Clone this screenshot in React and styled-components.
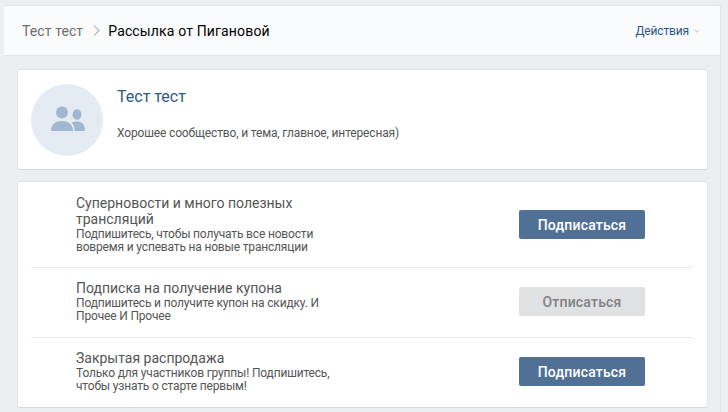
import React from 'react';
import styled, { createGlobalStyle } from 'styled-components';

const GlobalStyle = createGlobalStyle`
  html, body {
    margin: 0;
    height: 412px;
    overflow: hidden;
    background: #edeef0;
    font-family: Roboto, "Liberation Sans", sans-serif;
    color: #4d4d4d;
  }
`;

const Panel = styled.div`
  box-sizing: border-box;
  width: 717px;
  height: 412px;
  margin: 5px 0 0 4px;
  border-right: 1px solid #e3e4e8;
`;

const Header = styled.header`
  display: flex;
  align-items: center;
  justify-content: space-between;
  box-sizing: border-box;
  height: 51px;
  padding: 0 20px 0 18px;
  background: #fafbfc;
  border-top: 1px solid #e3e4e8;
  border-bottom: 1px solid #e3e4e8;
  border-radius: 2px 2px 0 0;
`;

const Crumbs = styled.div`
  display: flex;
  align-items: center;
  font-size: 14px;
`;

const CrumbLink = styled.span`
  color: #6d6d6d;
  letter-spacing: 0.1px;
`;

const CrumbSep = styled.svg`
  width: 7px;
  height: 11px;
  margin: 0 8px 0 10px;
  fill: none;
  stroke: #b8bcc2;
  stroke-width: 1.3;
`;

const CrumbCurrent = styled.span`
  color: #000;
  letter-spacing: 0.15px;
`;

const Actions = styled.div`
  display: flex;
  align-items: center;
  gap: 5px;
  font-size: 12px;
  letter-spacing: -0.15px;
  color: #2a5885;
`;

const Chevron = styled.svg`
  width: 6px;
  height: 4px;
  fill: none;
  stroke: #a5adb7;
  stroke-width: 1;
`;

const Body = styled.main`
  display: flex;
  flex-direction: column;
  gap: 13px;
  padding: 14px 13px 0 14px;
`;

const Card = styled.section`
  background: #fff;
  border-radius: 2px;
  box-shadow: 0 1px 0 0 #d7d8db, 0 0 0 1px #e3e4e8;
`;

const GroupCard = styled(Card)`
  display: flex;
  align-items: center;
  gap: 14px;
  height: 99px;
  padding: 0 13px;
`;

const Avatar = styled.div`
  display: flex;
  align-items: center;
  justify-content: center;
  flex: none;
  width: 72px;
  height: 72px;
  border-radius: 50%;
  background: #e5ebf3;
`;

const GroupIcon = styled.svg`
  width: 36px;
  height: 28px;
  margin: -2px 0 0 1px;
  fill: #a1b6d0;
`;

const GroupInfo = styled.div`
  display: flex;
  flex-direction: column;
  gap: 19px;
  padding-bottom: 12px;
`;

const GroupName = styled.div`
  font-size: 16px;
  line-height: 20px;
  color: #2f5a84;
`;

const GroupStatus = styled.div`
  font-size: 12px;
  line-height: 14px;
  letter-spacing: -0.15px;
  color: #555;
`;

const ListCard = styled(Card)`
  padding: 0 14px 0 13px;
`;

const Row = styled.div`
  display: flex;
  align-items: center;
  justify-content: space-between;
  box-sizing: border-box;
  height: ${p => p.$height}px;
  padding: 0 48px 2px 45px;
  &:first-child {
    padding: 1px 48px 1px 45px;
  }
  & + & {
    border-top: 1px solid #e7e8ec;
  }
`;

const RowText = styled.div`
  width: 260px;
`;

const RowTitle = styled.div`
  font-size: 14px;
  line-height: 16px;
  color: #555;
`;

const RowDescription = styled.div`
  margin-top: 1px;
  font-size: 12px;
  line-height: 13px;
  letter-spacing: -0.17px;
  color: #555;
`;

const Button = styled.button`
  width: 126px;
  height: 29px;
  border: 0;
  border-radius: 2px;
  font-family: inherit;
  font-size: 14px;
  font-weight: 500;
  letter-spacing: 0.2px;
  background: ${p => (p.$muted ? '#e0e1e3' : '#517096')};
  color: ${p => (p.$muted ? '#808285' : '#fff')};
`;

const rows = [
  {
    title: 'Суперновости и много полезных трансляций',
    text: 'Подпишитесь, чтобы получать все новости вовремя и успевать на новые трансляции',
    button: 'Подписаться',
    height: 85,
  },
  {
    title: 'Подписка на получение купона',
    text: 'Подпишитесь и получите купон на скидку. И Прочее И Прочее',
    button: 'Отписаться',
    muted: true,
    height: 70,
  },
  {
    title: 'Закрытая распродажа',
    text: 'Только для участников группы! Подпишитесь, чтобы узнать о старте первым!',
    button: 'Подписаться',
    height: 70,
  },
];

const App = () => (
  <>
    <GlobalStyle />
    <Panel>
      <Header>
        <Crumbs>
          <CrumbLink>Тест тест</CrumbLink>
          <CrumbSep viewBox="0 0 7 11">
            <path d="M1 0.5 L6 5.5 L1 10.5" />
          </CrumbSep>
          <CrumbCurrent>Рассылка от Пигановой</CrumbCurrent>
        </Crumbs>
        <Actions>
          Действия
          <Chevron viewBox="0 0 7 5">
            <path d="M0.5 1 L3.5 4 L6.5 1" />
          </Chevron>
        </Actions>
      </Header>
      <Body>
        <GroupCard>
          <Avatar>
            <GroupIcon viewBox="0 0 36 28">
              <circle cx="12" cy="7.5" r="6" />
              <path d="M1 26 C1 19 6 16 12 16 C18 16 23 19 23 26 Z" />
              <ellipse cx="27" cy="9.5" rx="4.5" ry="5.2" />
              <path d="M24.5 26 C24.5 22 23.5 19 21.5 17.5 C23 16.8 25 16.6 27 16.6 C31.5 16.6 35 19 35 26 Z" />
            </GroupIcon>
          </Avatar>
          <GroupInfo>
            <GroupName>Тест тест</GroupName>
            <GroupStatus>Хорошее сообщество, и тема, главное, интересная)</GroupStatus>
          </GroupInfo>
        </GroupCard>
        <ListCard>
          {rows.map(row => (
            <Row key={row.title} $height={row.height}>
              <RowText>
                <RowTitle>{row.title}</RowTitle>
                <RowDescription>{row.text}</RowDescription>
              </RowText>
              <Button $muted={row.muted}>{row.button}</Button>
            </Row>
          ))}
        </ListCard>
      </Body>
    </Panel>
  </>
);

export default App;
